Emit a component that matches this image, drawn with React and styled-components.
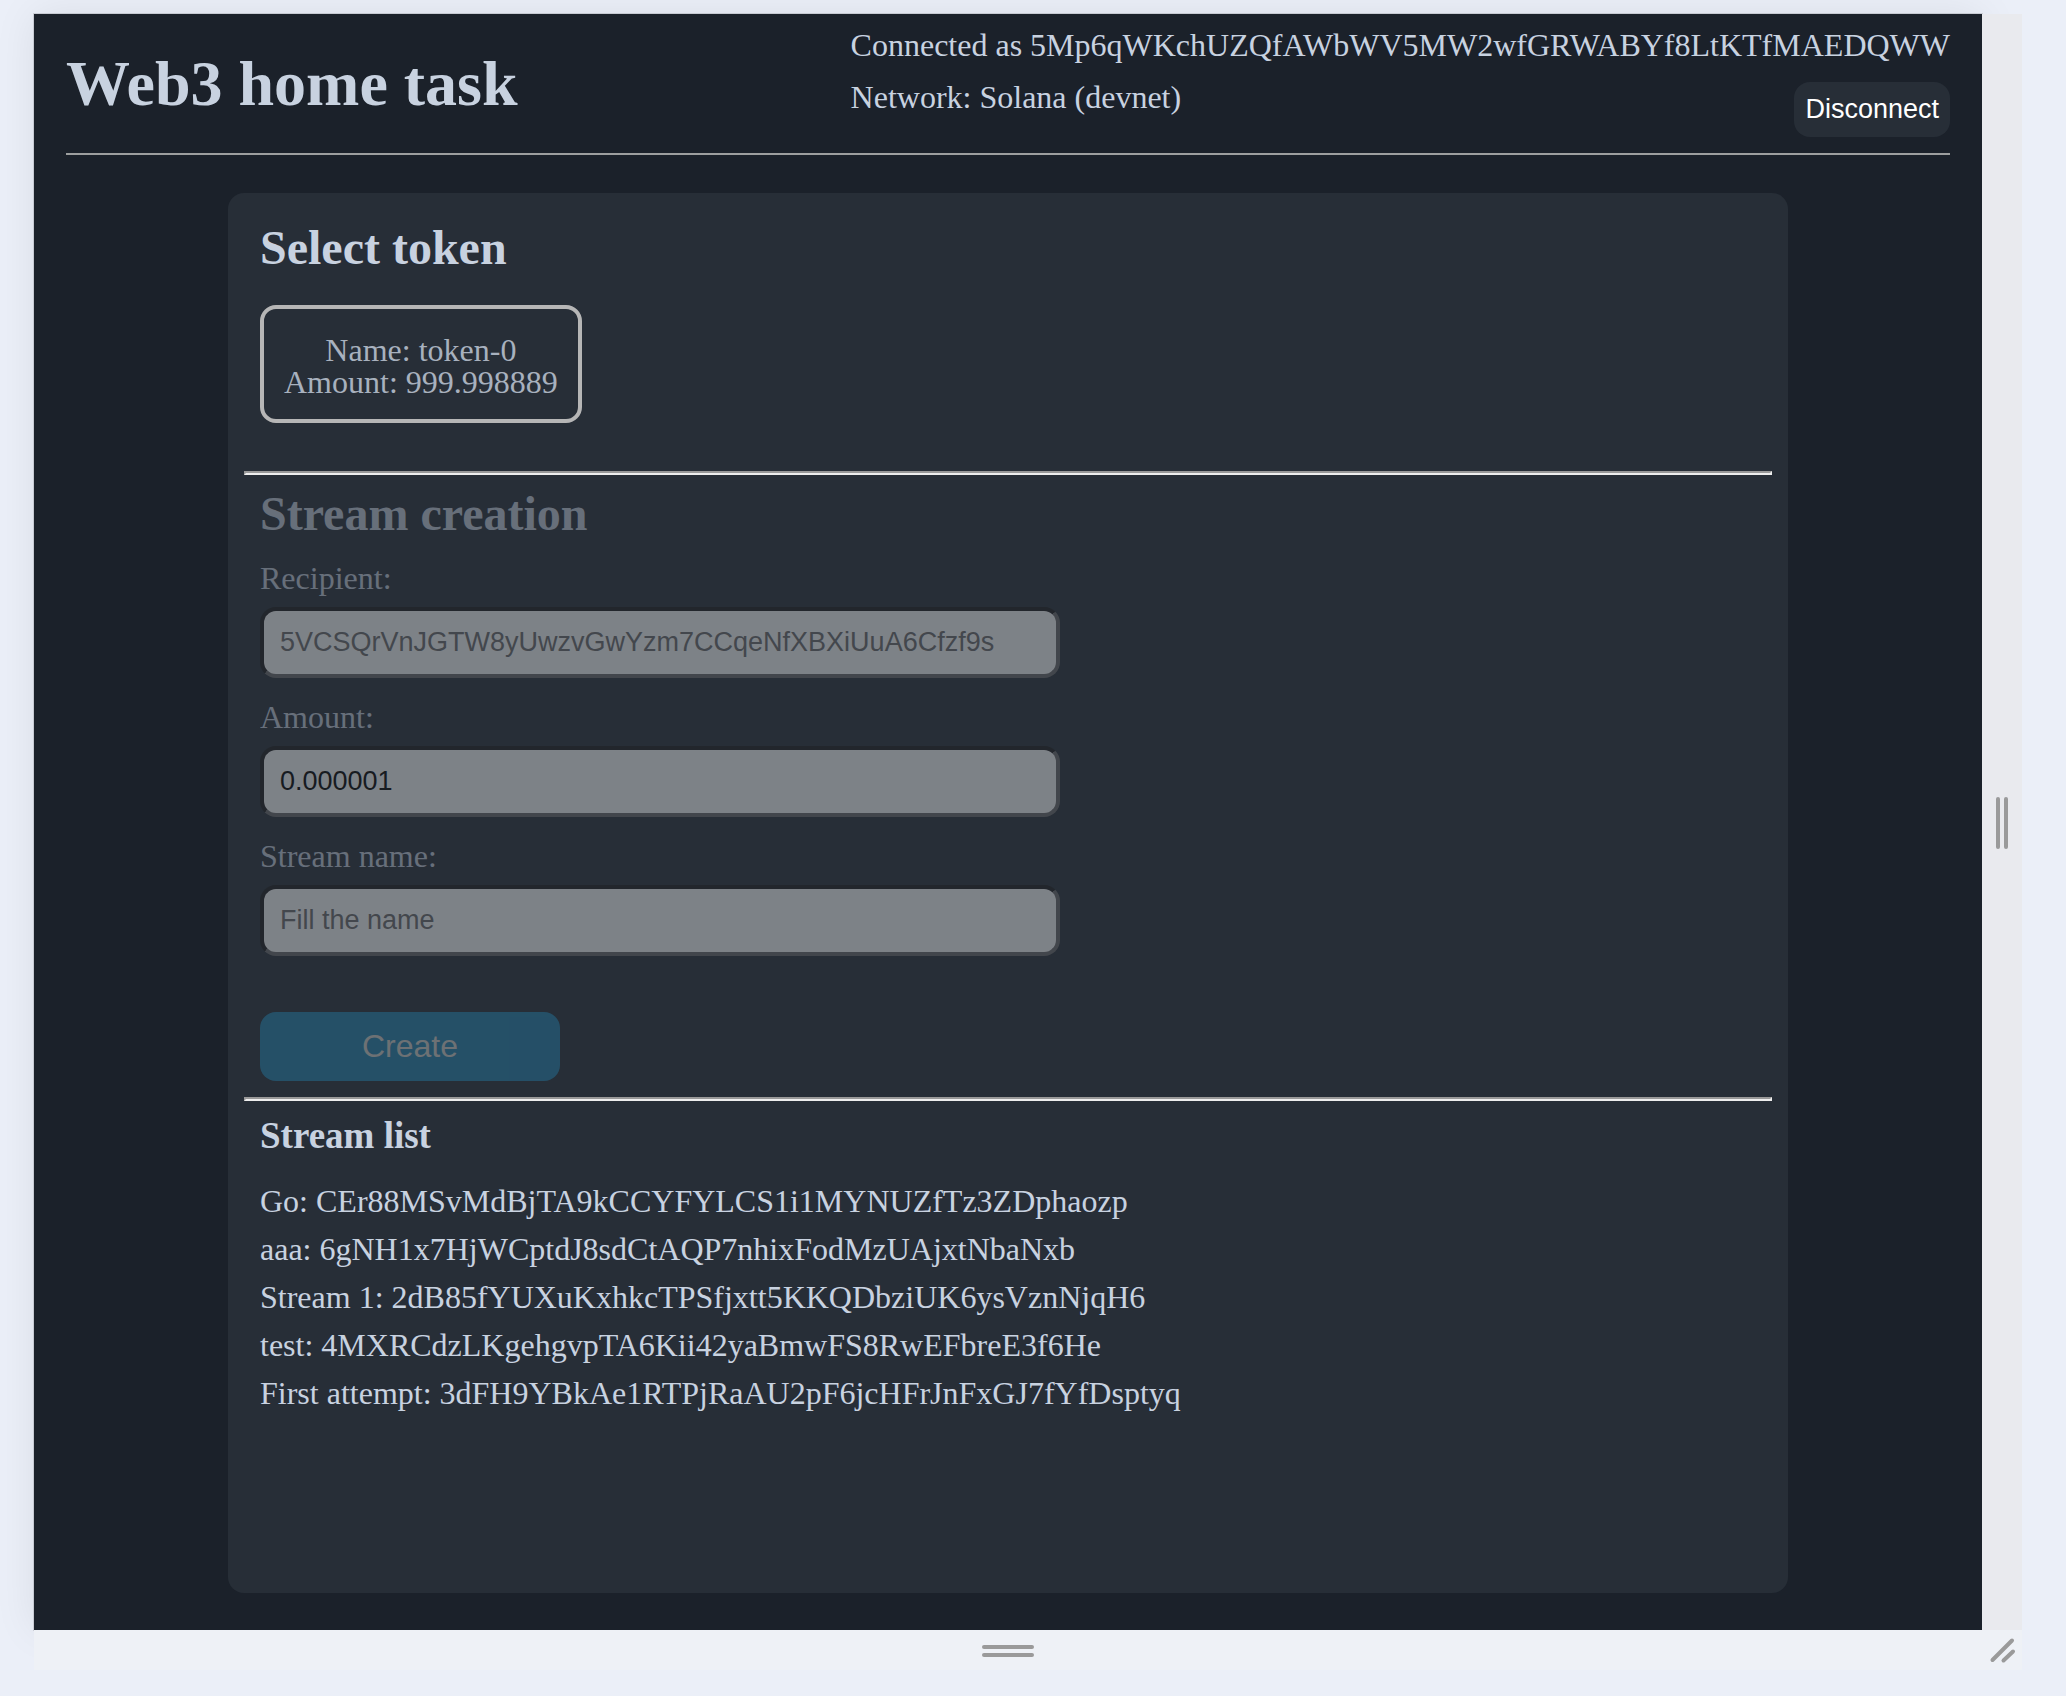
import React, { useState } from "react";
import styled, { createGlobalStyle } from "styled-components";

const colors = {
  page: "#ebeff8",
  app: "#1b212a",
  panel: "#272e37",
  text: "#c8d2e0",
  grip: "#9a9a9a",
};

const serif = '"Liberation Serif", "Times New Roman", Times, serif';
const sans = '"Liberation Sans", Arial, Helvetica, sans-serif';

const GlobalStyle = createGlobalStyle`
  *, *::before, *::after { box-sizing: border-box; }
  body {
    margin: 0;
    background: ${colors.page};
    color: ${colors.text};
    font-family: ${serif};
    font-size: 32px;
  }
  h1, h2, h3, p, ul { margin: 0; padding: 0; }
`;

const Viewport = styled.div`
  display: grid;
  grid-template-columns: minmax(0, 1fr) 40px;
  grid-template-rows: 1fr 40px;
  min-height: 100vh;
  padding: 14px 44px 26px 34px;
`;

const Screen = styled.div`
  display: flex;
  flex-direction: column;
  padding: 0 32px;
  background: ${colors.app};
  box-shadow: 0 0 0 1px rgba(0, 0, 0, 0.12), 0 0 40px rgba(0, 0, 0, 0.08);
`;

const ResizeHandle = styled.button`
  display: flex;
  flex-direction: ${(p) => (p.$vertical ? "row" : "column")};
  align-items: center;
  justify-content: center;
  gap: 4px;
  padding: 2px 0 0;
  border: 0;
  background: ${(p) => (p.$vertical ? "#e9eaee" : "#eef1f6")};
  cursor: ${(p) => p.$cursor};
`;

const Grip = styled.span`
  width: ${(p) => (p.$vertical ? "4px" : "52px")};
  height: ${(p) => (p.$vertical ? "52px" : "4px")};
  border-radius: 2px;
  background: ${colors.grip};
`;

const Header = styled.header`
  display: flex;
  align-items: center;
  justify-content: space-between;
  border-bottom: 2px solid #9d9f9f;
`;

const Title = styled.h1`
  font-size: 64px;
  line-height: 72px;
`;

const Account = styled.div`
  padding: 5px 0 16px;
`;

const AccountLine = styled.p`
  line-height: 52px;
`;

const AccountRow = styled.div`
  display: flex;
  justify-content: space-between;
`;

const DisconnectButton = styled.button`
  margin-top: 11px;
  padding: 12px 11px;
  border: 0;
  border-radius: 16px;
  background: ${colors.panel};
  color: #fff;
  font-family: ${sans};
  font-size: 27px;
  line-height: 31px;
`;

const Panel = styled.main`
  flex: 1;
  width: 100%;
  max-width: 1560px;
  margin: 38px auto 37px;
  padding: 28px 16px;
  border-radius: 16px;
  background: ${colors.panel};
`;

const Section = styled.section`
  padding: 0 16px;
`;

const Heading = styled.h2`
  font-size: 48px;
  line-height: 54px;
`;

const ListHeading = styled.h3`
  font-size: 37px;
  line-height: 46px;
`;

const Divider = styled.hr`
  margin: ${(p) => p.$gap} 0 12px;
  border: 2px solid;
  border-color: #999 #eee #eee #999;
`;

const TokenButton = styled.button`
  display: block;
  margin-top: 30px;
  padding: 25px 20px 21px;
  border: 4px solid #b6b6b6;
  border-radius: 16px;
  background: transparent;
  color: #a8b1be;
  font-family: ${serif};
  font-size: 32px;
  line-height: 32px;
`;

const TokenLine = styled.span`
  display: block;
`;

const Form = styled.form`
  padding: 0 16px;
  opacity: 0.4;
`;

const Fields = styled.div`
  display: grid;
  gap: 20px;
  max-width: 800px;
  margin: 18px 0 56px;
`;

const Field = styled.div`
  display: flex;
  flex-direction: column;
  gap: 10px;
`;

const Label = styled.label`
  line-height: 38px;
`;

const Input = styled.input`
  width: 100%;
  padding: 16px;
  border: 4px solid;
  border-color: #1c1c1c #6c6c6c #6c6c6c #1c1c1c;
  border-radius: 16px;
  background: #fff;
  color: #000;
  font-family: ${sans};
  font-size: 27px;
  line-height: 31px;
  height: 71px;

  &::placeholder { color: #6e6e6e; opacity: 1; }
`;

const CreateButton = styled.button`
  display: block;
  width: 300px;
  padding: 16px;
  border: 0;
  border-radius: 16px;
  background: #2483b0;
  color: #d6d6d0;
  font-family: ${sans};
  font-size: 32px;
  line-height: 37px;
`;

const StreamList = styled.ul`
  margin-top: 18px;
  list-style: none;
`;

const StreamItem = styled.li`
  line-height: 48px;
  overflow-wrap: anywhere;
`;

const streams = [
  { name: "Go", address: "CEr88MSvMdBjTA9kCCYFYLCS1i1MYNUZfTz3ZDphaozp" },
  { name: "aaa", address: "6gNH1x7HjWCptdJ8sdCtAQP7nhixFodMzUAjxtNbaNxb" },
  { name: "Stream 1", address: "2dB85fYUXuKxhkcTPSfjxtt5KKQDbziUK6ysVznNjqH6" },
  { name: "test", address: "4MXRCdzLKgehgvpTA6Kii42yaBmwFS8RwEFbreE3f6He" },
  { name: "First attempt", address: "3dFH9YBkAe1RTPjRaAU2pF6jcHFrJnFxGJ7fYfDsptyq" },
];

function TextField({ id, label, ...rest }) {
  return (
    <Field>
      <Label htmlFor={id}>{label}</Label>
      <Input id={id} type="text" {...rest} />
    </Field>
  );
}

export default function App() {
  const [recipient, setRecipient] = useState("");
  const [amount, setAmount] = useState("0.000001");
  const [name, setName] = useState("");

  return (
    <>
      <GlobalStyle />
      <Viewport>
        <Screen>
          <Header>
            <Title>Web3 home task</Title>
            <Account>
              <AccountLine>
                Connected as 5Mp6qWKchUZQfAWbWV5MW2wfGRWABYf8LtKTfMAEDQWW
              </AccountLine>
              <AccountRow>
                <AccountLine>Network: Solana (devnet)</AccountLine>
                <DisconnectButton type="button">Disconnect</DisconnectButton>
              </AccountRow>
            </Account>
          </Header>

          <Panel>
            <Section>
              <Heading>Select token</Heading>
              <TokenButton type="button">
                <TokenLine>Name: token-0</TokenLine>
                <TokenLine>Amount: 999.998889</TokenLine>
              </TokenButton>
            </Section>

            <Divider $gap="48px" />

            <Form onSubmit={(e) => e.preventDefault()}>
              <Heading>Stream creation</Heading>
              <Fields>
                <TextField
                  id="recipient"
                  label="Recipient:"
                  placeholder="5VCSQrVnJGTW8yUwzvGwYzm7CCqeNfXBXiUuA6Cfzf9s"
                  value={recipient}
                  onChange={(e) => setRecipient(e.target.value)}
                />
                <TextField
                  id="amount"
                  label="Amount:"
                  value={amount}
                  onChange={(e) => setAmount(e.target.value)}
                />
                <TextField
                  id="stream-name"
                  label="Stream name:"
                  placeholder="Fill the name"
                  value={name}
                  onChange={(e) => setName(e.target.value)}
                />
              </Fields>
              <CreateButton type="submit" disabled>
                Create
              </CreateButton>
            </Form>

            <Divider $gap="16px" />

            <Section>
              <ListHeading>Stream list</ListHeading>
              <StreamList>
                {streams.map((s) => (
                  <StreamItem key={s.address}>
                    {s.name}: {s.address}
                  </StreamItem>
                ))}
              </StreamList>
            </Section>
          </Panel>
        </Screen>

        <ResizeHandle type="button" aria-label="Resize width" $vertical $cursor="ew-resize">
          <Grip $vertical />
          <Grip $vertical />
        </ResizeHandle>
        <ResizeHandle type="button" aria-label="Resize height" $cursor="ns-resize">
          <Grip />
          <Grip />
        </ResizeHandle>
        <ResizeHandle type="button" aria-label="Resize both" $cursor="nwse-resize">
          <svg width="40" height="38" viewBox="0 2 40 38" aria-hidden="true">
            <path
              d="M10.5 30 L30 10.5 M21.5 30.5 L31 21.5"
              stroke={colors.grip}
              strokeWidth="4"
              strokeLinecap="round"
              fill="none"
            />
          </svg>
        </ResizeHandle>
      </Viewport>
    </>
  );
}
